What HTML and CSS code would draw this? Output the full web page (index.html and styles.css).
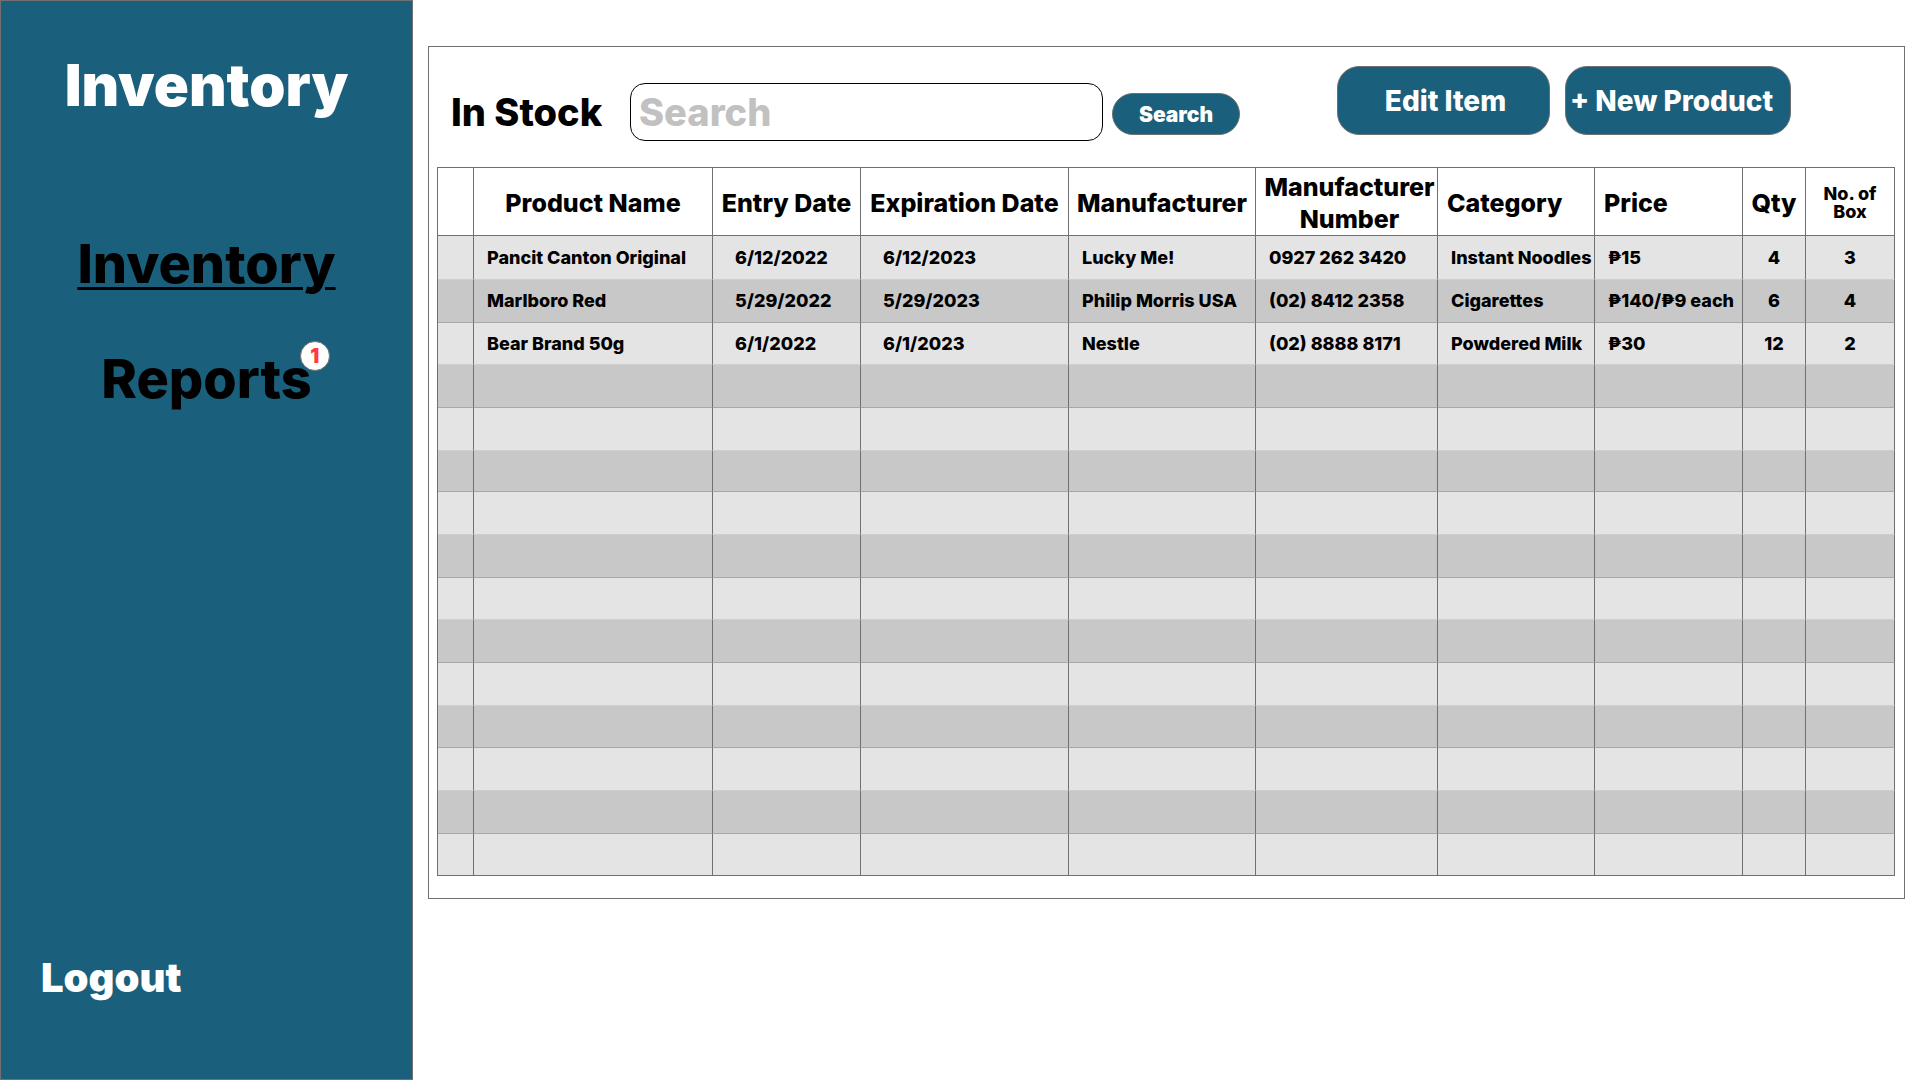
FILE: index.html
```html
<!DOCTYPE html>
<html lang="en">
<head>
<meta charset="utf-8">
<meta name="viewport" content="width=device-width, initial-scale=1">
<title>Inventory</title>
<link rel="stylesheet" href="styles.css">
</head>
<body>
<aside class="sidebar">
  <h1 class="brand">Inventory</h1>
  <nav class="nav">
    <a class="nav-link active" href="#inventory">Inventory</a>
    <a class="nav-link" href="#reports">Reports<span class="badge">1</span></a>
  </nav>
  <a class="logout" href="#logout">Logout</a>
</aside>
<main class="main">
  <section class="panel">
    <div class="toolbar">
      <form class="search">
        <h2 class="heading"><label for="search">In Stock</label></h2>
        <input class="search-box" id="search" type="search" placeholder="Search">
        <button class="button search-button" type="button">Search</button>
      </form>
      <div class="actions">
        <button class="button edit-button" type="button">Edit Item</button>
        <button class="button new-button" type="button">+ New Product</button>
      </div>
    </div>
    <table class="stock">
      <colgroup>
        <col class="c-mark"><col class="c-name"><col class="c-entry"><col class="c-expiry"><col class="c-maker"><col class="c-phone"><col class="c-category"><col class="c-price"><col class="c-qty"><col class="c-box">
      </colgroup>
      <thead>
        <tr><th></th><th>Product Name</th><th>Entry Date</th><th>Expiration Date</th><th>Manufacturer</th><th class="phone">Manufacturer<br>Number</th><th class="start">Category</th><th class="start">Price</th><th>Qty</th><th class="small">No. of<br>Box</th></tr>
      </thead>
      <tbody>
        <tr><td></td><td>Pancit Canton Original</td><td class="date">6/12/2022</td><td class="date">6/12/2023</td><td>Lucky Me!</td><td>0927 262 3420</td><td>Instant Noodles</td><td>₱15</td><td class="count">4</td><td class="count">3</td></tr>
        <tr><td></td><td>Marlboro Red</td><td class="date">5/29/2022</td><td class="date">5/29/2023</td><td>Philip Morris USA</td><td>(02) 8412 2358</td><td>Cigarettes</td><td>₱140/₱9 each</td><td class="count">6</td><td class="count">4</td></tr>
        <tr><td></td><td>Bear Brand 50g</td><td class="date">6/1/2022</td><td class="date">6/1/2023</td><td>Nestle</td><td>(02) 8888 8171</td><td>Powdered Milk</td><td>₱30</td><td class="count">12</td><td class="count">2</td></tr>
        <tr><td></td><td></td><td></td><td></td><td></td><td></td><td></td><td></td><td></td><td></td></tr>
        <tr><td></td><td></td><td></td><td></td><td></td><td></td><td></td><td></td><td></td><td></td></tr>
        <tr><td></td><td></td><td></td><td></td><td></td><td></td><td></td><td></td><td></td><td></td></tr>
        <tr><td></td><td></td><td></td><td></td><td></td><td></td><td></td><td></td><td></td><td></td></tr>
        <tr><td></td><td></td><td></td><td></td><td></td><td></td><td></td><td></td><td></td><td></td></tr>
        <tr><td></td><td></td><td></td><td></td><td></td><td></td><td></td><td></td><td></td><td></td></tr>
        <tr><td></td><td></td><td></td><td></td><td></td><td></td><td></td><td></td><td></td><td></td></tr>
        <tr><td></td><td></td><td></td><td></td><td></td><td></td><td></td><td></td><td></td><td></td></tr>
        <tr><td></td><td></td><td></td><td></td><td></td><td></td><td></td><td></td><td></td><td></td></tr>
        <tr><td></td><td></td><td></td><td></td><td></td><td></td><td></td><td></td><td></td><td></td></tr>
        <tr><td></td><td></td><td></td><td></td><td></td><td></td><td></td><td></td><td></td><td></td></tr>
        <tr><td></td><td></td><td></td><td></td><td></td><td></td><td></td><td></td><td></td><td></td></tr>
      </tbody>
    </table>
  </section>
</main>
</body>
</html>
```
FILE: styles.css
```css
:root {
  --teal: #1a607c;
  --line: #707070;
}

* {
  box-sizing: border-box;
}

body {
  margin: 0;
  min-height: 100vh;
  display: flex;
  background: #fff;
  color: #000;
  font-family: Inter, "Liberation Sans", sans-serif;
  font-weight: 800;
}

a {
  color: inherit;
  text-decoration: none;
}

/* Sidebar */
.sidebar {
  flex: none;
  width: 413px;
  display: flex;
  flex-direction: column;
  align-items: center;
  padding: 52px 40px 77px;
  background: var(--teal);
  border: 1px solid var(--line);
}

.brand {
  margin: 0 0 115px;
  font-size: 58px;
  font-weight: 900;
  line-height: 64px;
  color: #fff;
}

.nav {
  display: flex;
  flex-direction: column;
  align-items: center;
  gap: 51px;
}

.nav-link {
  position: relative;
  font-size: 54px;
  line-height: 64px;
}

.nav-link.active {
  text-decoration: underline;
  text-decoration-thickness: 3px;
  text-underline-offset: 4px;
}

.badge {
  position: absolute;
  top: -6px;
  right: -18px;
  width: 30px;
  height: 30px;
  border: 1px solid var(--line);
  border-radius: 50%;
  background: #fff;
  color: #ff3b3b;
  font-size: 20px;
  font-weight: 900;
  line-height: 28px;
  text-align: center;
}

.logout {
  align-self: flex-start;
  margin-top: auto;
  font-size: 40px;
  font-weight: 900;
  line-height: 48px;
  color: #fff;
}

/* Stock panel */
.main {
  flex: 1;
  min-width: 0;
  padding: 46px 15px;
}

.panel {
  padding: 0 9px 22px 8px;
  border: 1px solid var(--line);
}

.toolbar {
  display: flex;
  align-items: flex-start;
  gap: 97px;
  min-height: 120px;
  padding: 19px 104px 0 14px;
}

.search {
  flex: 1;
  min-width: 0;
  display: flex;
  align-items: center;
  gap: 9px;
  margin-top: 17px;
}

.heading {
  flex: none;
  width: 170px;
  margin: 0;
  font-size: 38px;
  font-weight: 800;
  line-height: 48px;
  white-space: nowrap;
}

.search-box {
  flex: 1;
  min-width: 0;
  height: 58px;
  padding: 0 8px;
  border: 1px solid #000;
  border-radius: 15px;
  background: #fff;
  color: #000;
  font: inherit;
  font-size: 38px;
  appearance: none;
}

.search-box::placeholder {
  color: #c1c1c1;
  opacity: 1;
}

.button {
  flex: none;
  padding: 0;
  border: 1px solid var(--line);
  background: var(--teal);
  color: #fff;
  font: inherit;
  font-size: 28px;
  white-space: nowrap;
}

.search-button {
  width: 128px;
  height: 42px;
  margin-top: 4px;
  border-radius: 21px;
  font-size: 21px;
  font-weight: 900;
}

.actions {
  display: flex;
  gap: 15px;
}

.edit-button,
.new-button {
  height: 69px;
  border-radius: 22px;
}

.edit-button {
  width: 213px;
  padding-left: 4px;
}

.new-button {
  width: 226px;
  padding-left: 4px;
  text-align: left;
}

/* Stock table */
.stock {
  width: 100%;
  table-layout: fixed;
  border-collapse: separate;
  border-spacing: 0;
  border: solid var(--line);
  border-width: 1px 0 0 1px;
}

.c-mark { width: 36px; }
.c-name { width: 239px; }
.c-entry { width: 148px; }
.c-expiry { width: 208px; }
.c-maker { width: 187px; }
.c-phone { width: 182px; }
.c-category { width: 157px; }
.c-price { width: 148px; }
.c-qty { width: 63px; }
.c-box { width: 89px; }

.stock th {
  height: 68px;
  padding: 3px 0 0;
  border: solid var(--line);
  border-width: 0 1px 1px 0;
  font-size: 25px;
  font-weight: 800;
  line-height: 32px;
  white-space: nowrap;
}

.stock .phone {
  padding-left: 6px;
}

.stock .start {
  padding-left: 9px;
  text-align: left;
}

.stock .small {
  font-size: 18px;
  line-height: 18px;
}

.stock td {
  height: 43px;
  padding: 0 0 0 13px;
  border-right: 1px solid var(--line);
  border-bottom: 1px solid #cecece;
  background: #e4e4e4;
  font-size: 18px;
  line-height: 24px;
  white-space: nowrap;
}

.stock tr:nth-child(3n) td {
  height: 42px;
}

.stock tbody tr:first-child td {
  height: 44px;
}

.stock tr:nth-child(6) td {
  height: 41px;
}

.stock tr:nth-child(even) td {
  background: #c8c8c8;
  border-bottom-color: #a8a8a8;
}

.stock tr:last-child td {
  border-bottom-color: var(--line);
}

.stock .date {
  padding-left: 22px;
}

.stock .count {
  padding: 0;
  text-align: center;
}
```
